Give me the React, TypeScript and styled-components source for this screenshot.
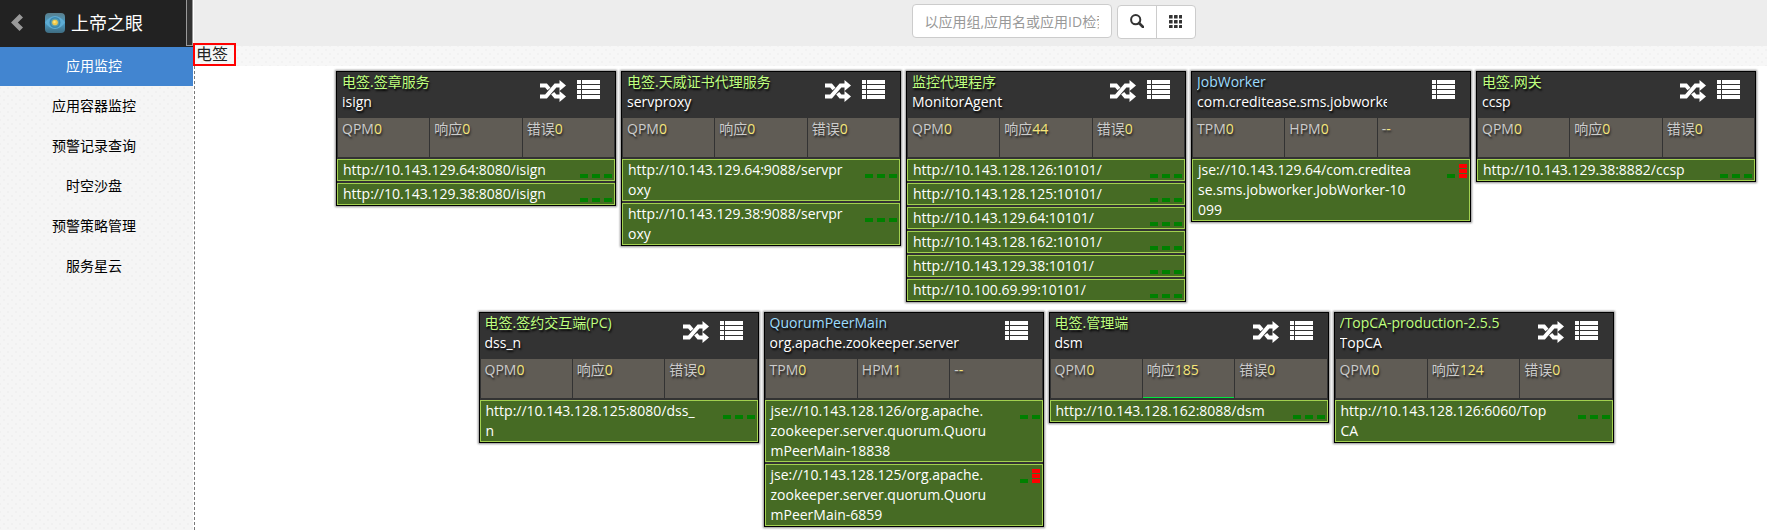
import React from 'react';
import styled, { createGlobalStyle, css } from 'styled-components';

const dots = css`
  background-image: radial-gradient(circle, rgba(0, 0, 0, 0.02) 0 1px, transparent 1px),
    radial-gradient(circle, rgba(0, 0, 0, 0.02) 0 1px, transparent 1px);
  background-size: 8px 8px;
  background-position: 0 0, 4px 4px;
`;

const GlobalStyle = createGlobalStyle`
  * { box-sizing: border-box; }
  body {
    margin: 0;
    background: #fff;
    color: #000;
    font: 14px/20px 'Open Sans', 'Noto Sans CJK SC', sans-serif;
  }
  button, input { font: inherit; }
  ul { list-style: none; margin: 0; padding: 0; }
`;

const Page = styled.div`
  display: flex;
  min-height: 100vh;
`;

const Sidebar = styled.aside`
  flex: 0 0 194px;
  border-right: 1px solid #fff;
  background-color: #f5f5f5;
  ${dots}
`;

const Brand = styled.header`
  display: flex;
  align-items: center;
  height: 47px;
  padding-left: 11px;
  background: #222;
`;

const BackButton = styled.button`
  display: flex;
  padding: 0;
  margin: 0 22px 2px 0;
  border: 0;
  background: none;
  cursor: pointer;
`;

const Title = styled.h1`
  flex: 1;
  margin: 0 0 2px 6px;
  color: #fff;
  font-size: 18px;
  font-weight: 400;
  line-height: 24px;
  white-space: nowrap;
`;

const BrandLogo = styled.span`
  display: flex;
  margin-bottom: 2px;
`;

const Splitter = styled.div`
  width: 7px;
  height: 46px;
  margin-bottom: 1px;
  border: 1px solid #999;
  border-top: 0;
  background: #333;
`;

const MenuLink = styled.a<{ $active?: boolean }>`
  display: block;
  height: ${p => (p.$active ? 39 : 40)}px;
  padding-right: 5px;
  color: ${p => (p.$active ? '#fff' : '#000')};
  background: ${p => (p.$active ? '#4285d0' : 'transparent')};
  line-height: ${p => (p.$active ? 38 : 40)}px;
  text-align: center;
  text-decoration: none;
`;

const Main = styled.main`
  flex: 1;
  min-width: 0;
  display: flex;
  flex-direction: column;
`;

const Toolbar = styled.form`
  display: flex;
  justify-content: center;
  gap: 5px;
  height: 46px;
  padding: 4px 0 0 146px;
  background: #ededed;
`;

const SearchBox = styled.input`
  width: 200px;
  height: 34px;
  padding: 6px 12px;
  border: 1px solid #ccc;
  border-radius: 4px;
  background: #fff;
  &::placeholder { color: #999; opacity: 1; }
`;

const ButtonGroup = styled.div`
  display: flex;
  height: 34px;
  margin-top: 1px;
  border: 1px solid #ccc;
  border-radius: 4px;
  background: #fff;
`;

const ToolButton = styled.button`
  display: flex;
  align-items: center;
  justify-content: center;
  width: 38px;
  padding: 0 0 2px;
  border: 0;
  background: none;
  cursor: pointer;
  & + & { width: 39px; border-left: 1px solid #ccc; }
`;

const GroupBar = styled.div`
  position: relative;
  height: 20px;
  background-color: #f7f7f7;
  ${dots}
`;

const GroupLabel = styled.h2`
  position: absolute;
  left: -1px;
  bottom: 0;
  margin: 0;
  padding: 0 6px 0 1px;
  border: 2px solid #f00;
  color: #222;
  font-size: 16px;
  font-weight: 400;
  line-height: 19px;
`;

const Board = styled.section`
  flex: 1;
  display: flex;
  flex-wrap: wrap;
  justify-content: center;
  align-content: flex-start;
  align-items: flex-start;
  gap: 10px 5px;
  padding: 5px 0 3px 130px;
  border-left: 1px dashed #777;
`;

const CardBox = styled.article`
  width: 280px;
  border: 1px solid #000;
  background: #333;
  box-shadow: 0 0 2px 1px rgba(0, 0, 0, 0.45);
`;

const CardHead = styled.header`
  display: flex;
  height: 46px;
  padding: 0 15px 0 5px;
  text-shadow: 1px 2px 2px #000;
`;

const Names = styled.div`
  width: 190px;
  overflow: hidden;
  white-space: nowrap;
`;

const GroupName = styled.div<{ $job?: boolean }>`
  color: ${p => (p.$job ? '#9cdcfe' : '#bfff7f')};
`;

const AppName = styled.div`
  color: #fff;
`;

const Actions = styled.div`
  flex: 1;
  display: flex;
  align-items: flex-start;
  justify-content: flex-end;
  gap: 11px;
  padding-top: 8px;
`;

const IconButton = styled.button`
  display: flex;
  padding: 0;
  border: 0;
  background: none;
  cursor: pointer;
`;

const Stats = styled.div`
  display: grid;
  grid-template-columns: repeat(3, 1fr);
  gap: 1px;
  margin: 0 1px 2px;
`;

const Stat = styled.div<{ $live?: boolean }>`
  height: 39px;
  padding-left: 4px;
  border-bottom: 1px solid ${p => (p.$live ? '#00e640' : '#605c55')};
  background: #605c55;
  color: #ccc;
  line-height: 22px;
  text-shadow: 1px 2px 2px #222;
`;

const Value = styled.span`
  color: #f7e779;
`;

const Hosts = styled.ul`
  display: grid;
  gap: 2px;
`;

const Host = styled.li`
  display: flex;
  justify-content: space-between;
  padding: 0 2px 0 5px;
  border: 1px solid #a2d04f;
  background: #466b24;
`;

const HostLink = styled.a`
  width: 228px;
  color: #fff;
  text-decoration: none;
  white-space: pre-line;
  word-break: break-all;
`;

const Meters = styled.div`
  display: flex;
  align-items: flex-end;
  gap: 4px;
  height: 15px;
  margin-top: 3px;
`;

const Meter = styled.div`
  display: grid;
  gap: 1px;
`;

const Segment = styled.i<{ $alert?: boolean }>`
  width: 8px;
  height: 4px;
  background: ${p => (p.$alert ? '#f00' : '#008000')};
`;

const ChevronIcon = () => (
  <svg width="12" height="17" viewBox="0 0 12 17" aria-hidden="true">
    <path d="M8.5 0 12 3.4 6.8 8.5 12 13.6 8.5 17 0 8.5z" fill="#999" />
  </svg>
);

const LogoIcon = () => (
  <svg width="20" height="20" viewBox="0 0 20 20" aria-hidden="true">
    <defs>
      <linearGradient id="tile" x1="0" y1="0" x2="0" y2="1">
        <stop offset="0" stopColor="#5a7f8c" />
        <stop offset="0.5" stopColor="#4b9bc4" />
        <stop offset="1" stopColor="#3f6c80" />
      </linearGradient>
    </defs>
    <rect width="20" height="20" rx="4" fill="url(#tile)" />
    <path d="M0 9.500Q4.500 3 10 3t10 6.500Q15.500 16 10 16T0 9.500z" fill="#5eacd3" />
    <circle cx="10" cy="9.500" r="5.500" fill="#3a86b0" />
    <circle cx="10" cy="9.500" r="4" fill="#5f9fa8" />
    <circle cx="10" cy="9.500" r="2.800" fill="#f2c84a" />
    <circle cx="9.500" cy="9" r="1.200" fill="#ffe680" />
  </svg>
);

const SearchIcon = () => (
  <svg width="14" height="14" viewBox="0 0 14 14" fill="none" stroke="#333" aria-hidden="true">
    <circle cx="5.700" cy="5.700" r="4.600" strokeWidth="2" />
    <path d="m9 9 4 4" strokeWidth="2.600" strokeLinecap="round" />
  </svg>
);

const GridIcon = () => (
  <svg width="13" height="13" viewBox="0 0 13 13" fill="#333" aria-hidden="true">
    {[0, 5, 10].map(y => [0, 5, 10].map(x => (
      <rect key={`${x}-${y}`} x={x} y={y} width="3.600" height="3.400" rx="0.500" />
    )))}
  </svg>
);

const ShuffleIcon = () => (
  <svg width="26" height="22" viewBox="0 0 26 22" aria-hidden="true">
    <g fill="none" stroke="#fff" strokeWidth="4">
      <path d="M0 16.500h6L15.500 5.500H20" />
      <path d="M0 5.500h6L9 9M12.700 13.200l2.800 3.300H20" />
    </g>
    <path d="M19.500 0 26 5.500 19.500 11zM19.500 11 26 16.500 19.500 22z" fill="#fff" />
  </svg>
);

const ListIcon = () => (
  <svg width="23" height="19" viewBox="0 0 23 19" fill="#fff" aria-hidden="true">
    {[0, 5, 10, 15].map(y => (
      <path key={y} d={`M0 ${y}h4v4h-4zM5 ${y}h18v4h-18z`} />
    ))}
  </svg>
);

type HostData = { url: string; levels: number[] };
type AppData = {
  group: string;
  name: string;
  job?: boolean;
  stats: [string, string][];
  live?: number;
  hosts: HostData[];
};

const idle = [1, 1, 1];
const web = (response: string): [string, string][] => [['QPM', '0'], ['响应', response], ['错误', '0']];
const job = (hpm: string): [string, string][] => [['TPM', '0'], ['HPM', hpm], ['-', '-']];

const apps: AppData[] = [
  { group: '电签.签章服务', name: 'isign', stats: web('0'), hosts: [
    { url: 'http://10.143.129.64:8080/isign', levels: idle },
    { url: 'http://10.143.129.38:8080/isign', levels: idle },
  ] },
  { group: '电签.天威证书代理服务', name: 'servproxy', stats: web('0'), hosts: [
    { url: 'http://10.143.129.64:9088/servpr\noxy', levels: idle },
    { url: 'http://10.143.129.38:9088/servpr\noxy', levels: idle },
  ] },
  { group: '监控代理程序', name: 'MonitorAgent', stats: web('44'), hosts: [
    '10.143.128.126', '10.143.128.125', '10.143.129.64', '10.143.128.162', '10.143.129.38', '10.100.69.99',
  ].map(ip => ({ url: `http://${ip}:10101/`, levels: idle })) },
  { group: 'JobWorker', name: 'com.creditease.sms.jobworker', job: true, stats: job('0'), hosts: [
    { url: 'jse://10.143.129.64/com.creditea\nse.sms.jobworker.JobWorker-10\n099', levels: [1, 3] },
  ] },
  { group: '电签.网关', name: 'ccsp', stats: web('0'), hosts: [
    { url: 'http://10.143.129.38:8882/ccsp', levels: idle },
  ] },
  { group: '电签.签约交互端(PC)', name: 'dss_n', stats: web('0'), hosts: [
    { url: 'http://10.143.128.125:8080/dss_\nn', levels: idle },
  ] },
  { group: 'QuorumPeerMain', name: 'org.apache.zookeeper.server', job: true, stats: job('1'), hosts: [
    { url: 'jse://10.143.128.126/org.apache.\nzookeeper.server.quorum.Quoru\nmPeerMain-18838', levels: [1, 1] },
    { url: 'jse://10.143.128.125/org.apache.\nzookeeper.server.quorum.Quoru\nmPeerMain-6859', levels: [1, 3] },
  ] },
  { group: '电签.管理端', name: 'dsm', stats: web('185'), live: 1, hosts: [
    { url: 'http://10.143.128.162:8088/dsm', levels: idle },
  ] },
  { group: '/TopCA-production-2.5.5', name: 'TopCA', stats: web('124'), hosts: [
    { url: 'http://10.143.128.126:6060/Top\nCA', levels: idle },
  ] },
];

const menu = ['应用监控', '应用容器监控', '预警记录查询', '时空沙盘', '预警策略管理', '服务星云'];

const AppCard = ({ app }: { app: AppData }) => (
  <CardBox>
    <CardHead>
      <Names>
        <GroupName $job={app.job}>{app.group}</GroupName>
        <AppName>{app.name}</AppName>
      </Names>
      <Actions>
        {!app.job && <IconButton type="button" aria-label="调用链"><ShuffleIcon /></IconButton>}
        <IconButton type="button" aria-label="列表"><ListIcon /></IconButton>
      </Actions>
    </CardHead>
    <Stats>
      {app.stats.map(([label, value], i) => (
        <Stat key={label} $live={app.live === i}>{label}<Value>{value}</Value></Stat>
      ))}
    </Stats>
    <Hosts>
      {app.hosts.map(host => (
        <Host key={host.url}>
          <HostLink href="#">{host.url}</HostLink>
          <Meters>
            {host.levels.map((level, i) => (
              <Meter key={i}>
                {Array.from({ length: level }, (_, n) => <Segment key={n} $alert={level > 1} />)}
              </Meter>
            ))}
          </Meters>
        </Host>
      ))}
    </Hosts>
  </CardBox>
);

export default function App() {
  return (
    <Page>
      <GlobalStyle />
      <Sidebar>
        <Brand>
          <BackButton type="button" aria-label="返回"><ChevronIcon /></BackButton>
          <BrandLogo><LogoIcon /></BrandLogo>
          <Title>上帝之眼</Title>
          <Splitter />
        </Brand>
        <nav>
          <ul>
            {menu.map((item, i) => (
              <li key={item}><MenuLink href="#" $active={i === 0}>{item}</MenuLink></li>
            ))}
          </ul>
        </nav>
      </Sidebar>
      <Main>
        <Toolbar onSubmit={e => e.preventDefault()}>
          <SearchBox type="text" aria-label="检索" placeholder="以应用组,应用名或应用ID检索" />
          <ButtonGroup>
            <ToolButton type="submit" aria-label="搜索"><SearchIcon /></ToolButton>
            <ToolButton type="button" aria-label="全部"><GridIcon /></ToolButton>
          </ButtonGroup>
        </Toolbar>
        <GroupBar><GroupLabel>电签</GroupLabel></GroupBar>
        <Board>
          {apps.map(app => <AppCard key={app.group} app={app} />)}
        </Board>
      </Main>
    </Page>
  );
}
